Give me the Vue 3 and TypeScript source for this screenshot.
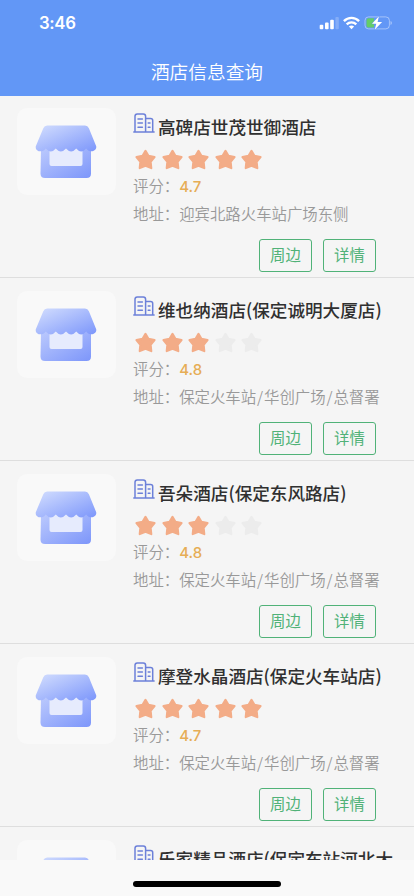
<script setup lang="ts">
interface Hotel {
  name: string
  stars: number
  score: string
  address: string
}

const hotels: Hotel[] = [
  { name: '高碑店世茂世御酒店', stars: 5, score: '4.7', address: '迎宾北路火车站广场东侧' },
  { name: '维也纳酒店(保定诚明大厦店)', stars: 3, score: '4.8', address: '保定火车站/华创广场/总督署' },
  { name: '吾朵酒店(保定东风路店)', stars: 3, score: '4.8', address: '保定火车站/华创广场/总督署' },
  { name: '摩登水晶酒店(保定火车站店)', stars: 5, score: '4.7', address: '保定火车站/华创广场/总督署' },
]

const nextHotel = '乐家精品酒店(保定车站河北大'

const parts = (address: string): string[] => address.split(/(\/)/)
</script>

<template>
  <div class="screen">
    <svg class="defs" width="0" height="0" aria-hidden="true">
      <defs>
        <linearGradient id="roof" x1="0" y1="0" x2="1" y2="1">
          <stop offset="0" stop-color="#d3defe" />
          <stop offset="1" stop-color="#7c96fb" />
        </linearGradient>
        <linearGradient id="wall" x1="0" y1="0" x2="1" y2="1">
          <stop offset="0" stop-color="#bccafd" />
          <stop offset="1" stop-color="#7d96fa" />
        </linearGradient>
        <symbol id="shop" viewBox="0 0 62 54">
          <path d="M6 23H56V48.5Q56 53 51.5 53H10Q5.5 53 5.5 48.5Z" fill="url(#wall)" />
          <path d="M14.5 21H47.5V39Q47.5 41 45.5 41H16.5Q14.5 41 14.5 39Z" fill="#e6ebfd" />
          <path d="M12.2.5H50Q52.8.5 53.9 3.2L61.2 21.2C62.2 26.6 54.3 28.4 51.2 23.4Q46.2 29.4 41.2 23.4Q36.2 29.4 31 23.4Q25.8 29.4 20.8 23.4Q15.8 29.4 10.8 23.4C7.6 28.4-.2 26.6.8 21.2L8.3 3.2Q9.4.5 12.2.5Z" fill="url(#roof)" />
        </symbol>
        <symbol id="building" viewBox="0 0 22 20">
          <path d="M.8 19.1H21.1M2 19V3.2Q2 .9 4.3.9H10.3Q12.6.9 12.6 3.2V19M12.6 5.4H17.6Q19.7 5.4 19.7 7.5V19" />
          <path d="M5 6H9.4M5 10.1H9.4M5 14.2H9.4M15.2 10.1H17M15.2 14.2H17" />
        </symbol>
      </defs>
    </svg>

    <header class="header">
      <div class="status">
        <span class="time">3:46</span>
        <div class="indicators">
          <svg width="20" height="14" viewBox="0 0 20 14" fill="#fff">
            <rect x=".7" y="8.8" width="3.6" height="4.4" rx="1" />
            <rect x="6" y="6.6" width="3.6" height="6.6" rx="1" />
            <rect x="11.2" y="3.7" width="3.6" height="9.5" rx="1" />
            <rect x="16.4" y="1" width="3.4" height="12.2" rx="1" opacity=".22" />
          </svg>
          <svg width="17" height="14" viewBox="0 0 17 14" fill="none" stroke="#fff" stroke-width="2.4">
            <path d="M.9 5.1C5.2.8 11.8.8 16.1 5.1" />
            <path d="M3.7 8.3C6.4 5.7 10.6 5.7 13.3 8.3" />
            <path d="M8.5 13.2 5.9 10.5Q8.5 8.4 11.1 10.5Z" fill="#fff" stroke="none" />
          </svg>
          <svg width="28" height="14" viewBox="0 0 28 14">
            <rect x="1" y=".9" width="24.4" height="12" rx="3.6" fill="none" stroke="#fff" stroke-opacity=".42" />
            <path d="M26.5 5v4q1.4-.6 1.4-2T26.5 5Z" fill="#fff" opacity=".45" />
            <path d="M4.4 2.3H10v9.3H4.4q-1.9 0-1.9-1.9V4.2q0-1.9 1.9-1.9Z" fill="#65cd69" />
            <path d="M14.9.2 8 7.7h4.3l-1.6 6.1L18.1 5.9h-4.5Z" fill="#fff" stroke="#6297f6" stroke-width=".8" paint-order="stroke" />
          </svg>
        </div>
      </div>
      <h1 class="heading">酒店信息查询</h1>
    </header>

    <main class="list">
      <article v-for="hotel in hotels" :key="hotel.name" class="hotel">
        <div class="thumb"><svg width="62" height="54"><use href="#shop" /></svg></div>
        <div class="info">
          <div class="title">
            <svg class="building" width="22" height="20"><use href="#building" /></svg>
            <h2 class="name">{{ hotel.name }}</h2>
          </div>
          <div class="stars">
            <svg v-for="n in 5" :key="n" :class="['star', { lit: n <= hotel.stars }]" width="21" height="21" viewBox="0 0 20 20">
              <path d="M10 1.8 12.8 6.5 18.6 7.7 14.9 12.2 15.5 18.2 10 16 4.5 18.2 5.1 12.2 1.4 7.7 7.2 6.5Z" />
            </svg>
          </div>
          <p class="detail">评分：<span class="score">{{ hotel.score }}</span></p>
          <p class="detail">地址：<span v-for="(part, i) in parts(hotel.address)" :key="i" :class="{ slash: part === '/' }">{{ part }}</span></p>
          <div class="actions">
            <button class="action" type="button">周边</button>
            <button class="action" type="button">详情</button>
          </div>
        </div>
      </article>
      <article class="hotel">
        <div class="thumb"><svg width="62" height="54"><use href="#shop" /></svg></div>
        <div class="info">
          <div class="title">
            <svg class="building" width="22" height="20"><use href="#building" /></svg>
            <h2 class="name">{{ nextHotel }}</h2>
          </div>
        </div>
      </article>
    </main>

    <footer class="footer"><div class="home"></div></footer>
  </div>
</template>

<style scoped>
.screen {
  display: flex;
  flex-direction: column;
  width: 414px;
  height: 896px;
  overflow: hidden;
  background: #f5f5f5;
  font-family: "Noto Sans CJK SC", sans-serif;
}
.defs {
  position: absolute;
}
.header {
  flex: none;
  height: 96px;
  background: #6297f6;
  color: #fff;
}
.status {
  display: flex;
  justify-content: space-between;
  align-items: center;
  height: 45px;
  padding: 0 22px 0 39px;
}
.time {
  font: 600 16.8px/46px Inter, sans-serif;
  letter-spacing: -0.35px;
}
.indicators {
  display: flex;
  gap: 4px;
}
.heading {
  margin: 0;
  padding-top: 11px;
  font-size: 18.7px;
  font-weight: 350;
  line-height: 30px;
  text-align: center;
}
.list {
  flex: 1;
  min-height: 0;
  overflow: hidden;
}
.hotel {
  display: flex;
  align-items: flex-start;
  gap: 17px;
  box-sizing: border-box;
  height: 183px;
  padding: 13px 17px 0;
  border-bottom: 1px solid #dedede;
}
.hotel:first-child {
  height: 182px;
  padding-top: 12px;
}
.thumb {
  display: flex;
  flex: none;
  justify-content: center;
  align-items: center;
  box-sizing: border-box;
  width: 99px;
  height: 87px;
  padding-right: 1px;
  border-radius: 10px;
  background: #f9f9f9;
}
.info {
  flex: 1;
  min-width: 0;
}
.title {
  display: flex;
  align-items: flex-start;
  height: 40px;
  padding-top: 5px;
  box-sizing: border-box;
}
.building {
  flex: none;
  margin-right: 3px;
  fill: none;
  stroke: #6c80d9;
  stroke-width: 1.5;
  stroke-linecap: round;
  stroke-linejoin: round;
}
.name {
  margin: 1px 0 0;
  color: #303030;
  font-size: 17.6px;
  font-weight: 500;
  line-height: 26px;
  white-space: nowrap;
}
.stars {
  display: flex;
  gap: 5.5px;
  height: 24px;
  padding-left: 2.2px;
}
.star {
  margin-top: 0.5px;
  fill: #ececec;
  stroke: #ececec;
  stroke-width: 2;
  stroke-linejoin: round;
}
.star.lit {
  fill: #f3ac87;
  stroke: #f3ac87;
}
.detail {
  height: 27.5px;
  margin: 0;
  color: #999;
  font-size: 15.4px;
  font-weight: 350;
  line-height: 26px;
  white-space: nowrap;
}
.score {
  color: #e6ad55;
  font-family: Inter, sans-serif;
  font-size: 15px;
  font-weight: 500;
}
.slash {
  padding: 0 0.9px;
}
.actions {
  display: flex;
  justify-content: flex-end;
  gap: 11px;
  padding: 12px 21px 0 0;
}
.action {
  width: 53px;
  height: 33px;
  padding: 0 0 2px;
  border: 1px solid #50b278;
  border-radius: 3px;
  background: transparent;
  color: #50b278;
  font: inherit;
  font-size: 15.4px;
  line-height: 27px;
}
.footer {
  display: flex;
  flex: none;
  align-items: flex-end;
  justify-content: center;
  height: 36px;
  padding-bottom: 9px;
  box-sizing: border-box;
  background: #f9f9f9;
}
.home {
  width: 148px;
  height: 6px;
  border-radius: 3px;
  background: #000;
}
</style>
